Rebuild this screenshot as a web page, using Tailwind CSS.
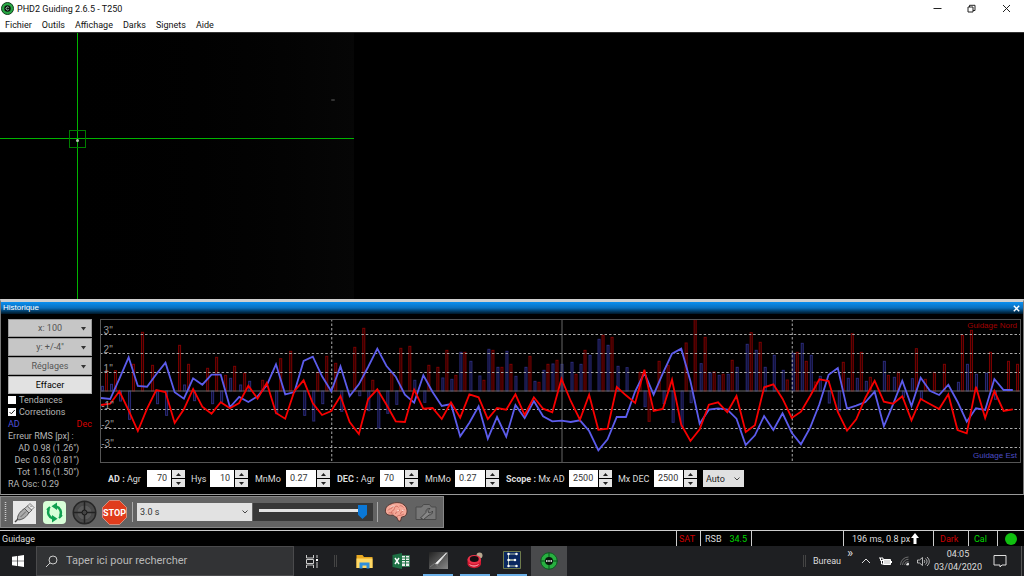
<!DOCTYPE html>
<html lang="fr">
<head>
<meta charset="utf-8">
<title>PHD2 Guiding 2.6.5 - T250</title>
<script src="https://cdn.jsdelivr.net/npm/@tailwindcss/browser@4"></script>
</head>
<body class="flex min-h-screen flex-col overflow-x-hidden bg-black font-[Roboto,'Noto_Sans',sans-serif] text-[9px] leading-3 text-white">

<header class="bg-white text-[#111]">
  <div class="flex h-[17px] items-center">
    <svg class="ml-px size-[13px]" viewBox="0 0 26 26"><circle cx="13" cy="13" r="12" fill="#27a844" stroke="#123c1c" stroke-width="2"/><circle cx="13" cy="13" r="6.500" fill="#0b130d"/><path d="M15.500 11a3 3 0 1 0 0 4" fill="none" stroke="#cfe" stroke-width="1.500"/></svg>
    <h1 class="ml-[3px] font-normal whitespace-nowrap">PHD2 Guiding 2.6.5 - T250</h1>
    <div class="ml-auto flex items-center">
      <button aria-label="Réduire" class="flex w-[34px] justify-center"><svg class="size-[9px]" viewBox="0 0 9 9"><path d="M.5 4.500h8" stroke="#222"/></svg></button>
      <button aria-label="Restaurer" class="flex w-[34px] justify-center"><svg class="size-[9px]" viewBox="0 0 9 9" fill="none" stroke="#222"><path d="M1 3h5v5H1zM2.500 3V1.300H8V6.500H6"/></svg></button>
      <button aria-label="Fermer" class="flex w-[36px] justify-center"><svg class="size-[9px]" viewBox="0 0 9 9"><path d="M1 1l7 7M8 1L1 8" stroke="#222"/></svg></button>
    </div>
  </div>
  <nav class="flex h-[15px] items-center gap-[10px] pl-[5px] whitespace-nowrap">
    <button>Fichier</button><button>Outils</button><button>Affichage</button><button>Darks</button><button>Signets</button><button>Aide</button>
  </nav>
</header>

<main class="relative min-h-[266px] flex-1 overflow-hidden border-t border-[#333] bg-black" aria-label="Image de guidage">
  <div class="absolute top-0 left-0 h-full w-[354px] bg-gradient-to-r from-black to-[#060606]"></div>
  <div class="absolute top-[66px] left-[331px] h-[2px] w-[4px] rounded-full bg-[#333]"></div>
  <div class="absolute top-[105px] left-0 h-px w-[354px] bg-[#00b400]"></div>
  <div class="absolute top-0 left-[77px] h-full w-px bg-[#00b400]"></div>
  <div class="absolute top-[97px] left-[69px] h-[18px] w-[17px] border border-[#007c00]"></div>
  <div class="absolute top-[106px] left-[76px] size-[3px] rounded-full bg-[#b0c8b0]"></div>
</main>

<section class="border-x border-t-[3px] border-b border-x-[#777] border-t-[#cfcfcf] border-b-[#999] bg-black" aria-label="Historique">
  <div class="flex h-3 items-center justify-between bg-gradient-to-b from-[#0a8ff0] via-[#0a6fbd] to-[#001626] pr-[3px] pl-[2px] font-['Liberation_Sans',Arial,sans-serif] text-[8px]">
    <h2>Historique</h2>
    <button aria-label="Fermer l'historique"><svg class="size-[7px]" viewBox="0 0 7 7"><path d="M.8.8l5.400 5.400M6.200.8L.8 6.200" stroke="#fff" stroke-width="1.400"/></svg></button>
  </div>
  <div class="flex gap-2 pt-[5px] pr-[2px] pl-[7px]">
    <div class="w-[84px] shrink-0 text-[#b4b4b4]">
      <div class="flex flex-col gap-px">
        <button class="relative h-[18px] border border-[#999] bg-[#c6c6c6] text-[#555]">x: 100<svg class="absolute top-[7px] right-1 h-1 w-[7px]" viewBox="0 0 7 4"><path d="M1 0h5L3.500 3.500z" fill="#333"/></svg></button>
        <button class="relative h-[18px] border border-[#999] bg-[#c6c6c6] text-[#555]">y: +/-4''<svg class="absolute top-[7px] right-1 h-1 w-[7px]" viewBox="0 0 7 4"><path d="M1 0h5L3.500 3.500z" fill="#333"/></svg></button>
        <button class="relative h-[18px] border border-[#999] bg-[#c6c6c6] text-[#555]">Réglages<svg class="absolute top-[7px] right-1 h-1 w-[7px]" viewBox="0 0 7 4"><path d="M1 0h5L3.500 3.500z" fill="#333"/></svg></button>
        <button class="h-[18px] border border-[#aaa] bg-[#e2e2e2] text-black">Effacer</button>
      </div>
      <label class="flex h-3 items-center gap-[3px]"><input type="checkbox" class="size-2 appearance-none bg-white">Tendances</label>
      <label class="flex h-3 items-center gap-[3px]"><span class="relative flex size-2"><input type="checkbox" checked class="size-2 appearance-none bg-white"><svg class="pointer-events-none absolute inset-0 size-2" viewBox="0 0 8 8"><path d="M1.500 4l1.800 1.800L6.800 2" fill="none" stroke="#222"/></svg></span>Corrections</label>
      <div class="flex justify-between"><span class="text-[#5050d8]">AD</span><span class="text-[#d80000]">Dec</span></div>
      <p>Erreur RMS [px] :</p>
      <dl class="grid grid-cols-[22px_1fr] gap-x-[3px]">
        <dt class="text-right">AD</dt><dd>0.98 (1.26'')</dd>
        <dt class="text-right">Dec</dt><dd>0.63 (0.81'')</dd>
        <dt class="text-right">Tot</dt><dd>1.16 (1.50'')</dd>
      </dl>
      <p>RA Osc: 0.29</p>
    </div>
    <div class="min-w-0 flex-1">
      <div class="relative h-36 overflow-hidden font-['Liberation_Sans',Arial,sans-serif] text-[10px] text-[#999]">
        <svg id="graph" class="block h-36 w-full" viewBox="0 0 920 144" preserveAspectRatio="none" fill="none">
          <g id="bars"></g>
          <path d="M0 72H920" stroke="#666"/>
          <path d="M461.500 0V144" stroke="#666"/>
          <path d="M0 15.500H920M0 34.500H920M0 53.500H920M0 90.500H920M0 109.500H920M0 128.500H920M231.500 0V144M691.500 0V144" stroke="#aaa" stroke-dasharray="2.500 2"/>
          <path id="ra" stroke="#5c5cec" stroke-width="1.800"/>
          <path id="dec" stroke="#f80000" stroke-width="1.800"/>
          <path d="M.5.5H919.500V143.500H.5z" stroke="#555"/>
        </svg>
        <div class="absolute top-[2px] left-0 w-[13px] text-right leading-[19px]">
          <p>3''</p><p>2''</p><p>1''</p>
        </div>
        <div class="absolute top-[77px] left-0 w-[14px] text-right leading-[19px]">
          <p>-1''</p><p>-2''</p><p>-3''</p>
        </div>
        <span class="absolute top-px right-1 text-[8px] text-[#a00000]">Guidage Nord</span>
        <span class="absolute right-1 bottom-px text-[8px] text-[#4c4cc4]">Guidage Est</span>
      </div>
      <form id="params" class="flex h-[31px] items-center pl-2 whitespace-nowrap text-[#ddd]">
        <label for="ra-agr" class="w-[39px]"><b>AD :</b> Agr</label>
        <span class="flex"><input id="ra-agr" value="70" class="h-[17px] w-6 bg-white pr-1 pb-px text-right text-[#333]"><span data-spin></span></span>
        <label for="ra-hys" class="ml-[6px] w-[19px]">Hys</label>
        <span class="flex"><input id="ra-hys" value="10" class="h-[17px] w-6 bg-white pr-1 pb-px text-right text-[#333]"><span data-spin></span></span>
        <label for="ra-mn" class="ml-[7px] w-[31px]">MnMo</label>
        <span class="flex"><input id="ra-mn" value="0.27" class="h-[17px] w-[30px] bg-white pb-px pl-1 text-[#333]"><span data-spin></span></span>
        <label for="dec-agr" class="ml-[7px] w-[43px]"><b>DEC :</b> Agr</label>
        <span class="flex"><input id="dec-agr" value="70" class="h-[17px] w-6 bg-white pb-px pl-1 text-[#333]"><span data-spin></span></span>
        <label for="dec-mn" class="ml-[7px] w-[30px]">MnMo</label>
        <span class="flex"><input id="dec-mn" value="0.27" class="h-[17px] w-[30px] bg-white pb-px pl-1 text-[#333]"><span data-spin></span></span>
        <label for="mx-ra" class="ml-[7px] w-[63px]"><b>Scope :</b> Mx AD</label>
        <span class="flex"><input id="mx-ra" value="2500" class="h-[17px] w-[29px] bg-white pb-px pl-1 text-[#333]"><span data-spin></span></span>
        <label for="mx-dec" class="ml-[6px] w-9">Mx DEC</label>
        <span class="flex"><input id="mx-dec" value="2500" class="h-[17px] w-[29px] bg-white pb-px pl-1 text-[#333]"><span data-spin></span></span>
        <span class="relative ml-[6px] flex"><select aria-label="Mode DEC" class="h-[17px] w-[41px] appearance-none bg-[#e0e0e0] pl-[3px] text-[#222]"><option>Auto</option></select><svg class="pointer-events-none absolute top-[7px] right-1 h-1 w-[6px]" viewBox="0 0 6 4"><path d="M.5.5L3 3 5.500.5" fill="none" stroke="#444"/></svg></span>
      </form>
    </div>
  </div>
</section>

<div class="border-b border-[#ccc] pt-px pb-[2px]" role="toolbar" aria-label="Guidage">
  <div class="flex h-8 w-[444px] items-center border border-[#888] bg-[#636363] pl-[3px]">
    <svg class="h-5 w-[3px]" viewBox="0 0 3 20"><path d="M1.500 0v20" stroke="#ccc" stroke-width="1.500" stroke-dasharray="1 1"/></svg>
    <button aria-label="Connecter" class="ml-[6px] size-[23px] bg-[#e8e8e8]">
      <svg class="size-[23px]" viewBox="0 0 46 46"><path d="M4 42l7-7" stroke="#444" stroke-width="3"/><path d="M9 36c0-8 5-15 14-21l9 8C27 32 20 37 11 38z" fill="#aaa" stroke="#444" stroke-width="1.800"/><path d="M23 15l6-5 9 8-6 6z" fill="#c8c8c8" stroke="#444" stroke-width="1.500"/><path d="M29 10l5-5 8 8-5 5z" fill="#eee" stroke="#555" stroke-width="1.500"/><path d="M15 32l11-11M34 9l3 3" stroke="#666" stroke-width="2"/></svg>
    </button>
    <button aria-label="Boucler" class="ml-[7px] size-[23px] rounded-sm bg-[#d8ffd8]">
      <svg class="size-[23px]" viewBox="0 0 46 46" fill="none" stroke="#10a050" stroke-width="5"><path d="M20 35A13 13 0 0 1 12 16M26 11a13 13 0 0 1 8 19"/><path d="M28 3v15l-11-7.500zM18 28v15l11-7.500z" fill="#10a050" stroke="none"/><path d="M8 18l6-6M38 28l-6 6" stroke-width="4"/></svg>
    </button>
    <button aria-label="Guider" class="ml-[6px] size-[25px]">
      <svg class="size-[25px]" viewBox="0 0 50 50"><circle cx="25" cy="25" r="22.500" fill="#4a4a4a" stroke="#262626" stroke-width="3"/><circle cx="25" cy="25" r="15" fill="#5a5a5a" stroke="#484848" stroke-width="2"/><path d="M25 3v44M3 25h44" stroke="#222" stroke-width="3"/><circle cx="25" cy="25" r="5" fill="#444" stroke="#161616" stroke-width="2"/></svg>
    </button>
    <button aria-label="Stop" class="ml-[5px] size-[25px]">
      <svg class="size-[25px]" viewBox="0 0 50 50"><path d="M15 1h20l14 14v20L35 49H15L1 35V15z" fill="#e03c1c" stroke="#e8a090" stroke-width="1.500"/><text x="25" y="32" text-anchor="middle" font-family="Roboto" font-weight="bold" font-size="18" fill="#fff">STOP</text></svg>
    </button>
    <div class="ml-[5px] h-5 w-px bg-[#aaa]"></div>
    <span class="relative ml-1 flex"><select aria-label="Durée d'exposition" class="h-[18px] w-[115px] appearance-none bg-[#e2e2e2] pl-[3px] text-[#333]"><option>3.0 s</option></select><svg class="pointer-events-none absolute top-[7px] right-1 h-1 w-[6px]" viewBox="0 0 6 4"><path d="M.5.5L3 3 5.500.5" fill="none" stroke="#444"/></svg></span>
    <div class="ml-px flex h-[18px] w-[120px] items-center bg-[#383838] px-[6px]">
      <input type="range" aria-label="Gamma" min="0" max="100" value="100" class="mb-[3px] h-[14px] w-full appearance-none bg-transparent [&::-webkit-slider-runnable-track]:h-[3px] [&::-webkit-slider-runnable-track]:bg-linear-[to_right,#e4e4e4_100px,transparent_100px] [&::-webkit-slider-thumb]:mt-[-4px] [&::-webkit-slider-thumb]:h-[14px] [&::-webkit-slider-thumb]:w-[9px] [&::-webkit-slider-thumb]:appearance-none [&::-webkit-slider-thumb]:bg-[#0a78d7] [&::-webkit-slider-thumb]:[clip-path:polygon(0_0,100%_0,100%_70%,50%_100%,0_70%)]">
    </div>
    <div class="ml-1 h-5 w-px bg-[#aaa]"></div>
    <button aria-label="Configuration avancée" class="ml-[6px] h-5 w-6">
      <svg class="h-5 w-6" viewBox="0 0 48 40"><path d="M3 19C2 11 8 6 14 4c8-4 20-4 26 2 6 4 7 12 5 18-2 5-6 5-10 6l-2 8h-4l-4-8c-4 0-5-4-8-4C11 27 4 26 3 19z" fill="#f4a898" stroke="#40211c" stroke-width="1.500"/><path d="M8 17c3-6 7-1 9-7M15 22c-1-6 6-4 6-9s6-6 8-2M23 24c1-7 8-3 8-9M33 24c-1-5 7-4 7-10M9 22c4-2 6 2 10 0M31 8c3-2 6 1 8 3M26 29c3-4 9-1 14-5" fill="none" stroke="#c86458" stroke-width="1.600"/><path d="M13 10c3-2 6-2 8-2M26 18l4-1M36 17l4-1" stroke="#ffe0d8" stroke-width="2"/></svg>
    </button>
    <button aria-label="Réglages caméra" class="ml-[7px] h-[18px] w-[22px]">
      <svg class="h-[18px] w-[22px]" viewBox="0 0 44 36"><path d="M2 8h11l4-5h12l4 5h9v25H2z" fill="#777" stroke="#4a4a4a" stroke-width="2"/><path d="M11 30l11-11c-1-5 3-9 8-8l-4 4 1 4 4 1 4-4c1 5-3 8-7 8L17 33z" fill="#888" stroke="#3e3e3e" stroke-width="1.800"/></svg>
    </button>
  </div>
</div>

<div class="flex h-[15px] items-center whitespace-nowrap text-[#ddd]" role="status">
  <span class="flex-1 pl-[2px]">Guidage</span>
  <span class="flex h-full w-6 items-center border-l border-[#ccc] pl-[2px] text-[#cc0000]">SAT</span>
  <span class="flex h-full w-[52px] items-center gap-2 border-x border-[#ccc] pl-1">RSB <span class="text-[#00d800]">34.5</span></span>
  <span class="w-[91px]"></span>
  <span class="flex h-full w-[90px] items-center border-l border-[#ccc] pl-2">196 ms, 0.8 px<svg class="ml-px h-[11px] w-2" viewBox="0 0 8 11"><path d="M4 0l4 5H5.500v6h-3V5H0z" fill="#fff"/></svg></span>
  <span class="flex h-full w-[35px] items-center border-l border-[#ccc] pl-[6px] text-[#cc0000]">Dark</span>
  <span class="flex h-full w-[29px] items-center border-l border-[#ccc] pl-[5px] text-[#00d800]">Cal</span>
  <span class="flex h-full w-[27px] items-center justify-center border-l border-[#ccc]"><span class="size-3 rounded-full bg-[#10c010]"></span></span>
</div>

<footer class="flex h-[30px] items-center bg-[#1e1f22] whitespace-nowrap">
  <button aria-label="Démarrer" class="flex h-full w-9 items-center justify-center"><svg class="size-3" viewBox="0 0 24 24" fill="#fff"><path d="M0 3.500l10-1.400V11.300H0zM11.500 2L24 0v11.300H11.500zM0 12.700h10v9.200L0 20.500zM11.500 12.700H24V24l-12.500-2z"/></svg></button>
  <div class="flex h-full w-[258px] items-center border border-[#4a4a4c] bg-[#323335] pl-2">
    <svg class="size-[13px] shrink-0" viewBox="0 0 13 13" fill="none" stroke="#ccc"><circle cx="8" cy="5" r="4"/><path d="M5 8L1 12"/></svg>
    <input aria-label="Rechercher" placeholder="Taper ici pour rechercher" class="ml-2 w-full bg-transparent text-[11px] placeholder:text-[#b8b8b8] placeholder:opacity-100">
  </div>
  <button aria-label="Vue des tâches" class="ml-[11px]"><svg class="h-[13px] w-[14px]" viewBox="0 0 14 13" fill="none" stroke="#ccc"><path d="M1.500 0v3h7V0M1.500 13v-3h7v3M1.500 4.500h7v4h-7zM12 0v3M12 7v6"/><path d="M11 5h2" stroke="#fff" stroke-width="2"/></svg></button>
  <div class="ml-[15px] h-3 w-[3px] border-x border-[#444]"></div>
  <div class="ml-[9px] flex h-full gap-px">
    <button aria-label="Explorateur" class="flex w-9 items-center justify-center"><svg class="h-[15px] w-[17px]" viewBox="0 0 34 30"><path d="M1 2h12l3 4h17v22H1z" fill="#e8a820"/><path d="M1 9h32v19H1z" fill="#ffd865"/><path d="M7 29V17h20v12h-6v-6h-8v6z" fill="#2f8fdc"/></svg></button>
    <button aria-label="Excel" class="flex w-9 items-center justify-center"><svg class="h-4 w-[18px]" viewBox="0 0 36 32"><path d="M18 5h17v22H18z" fill="#eee" stroke="#1f7244" stroke-width="1.500"/><path d="M20 10h14M20 15h14M20 20h14M27 6v20" stroke="#1f7244" stroke-width="2"/><path d="M1 4l19-4v32L1 28z" fill="#1d7044"/><path d="M6 10l8 12M14 10L6 22" stroke="#fff" stroke-width="2.800"/></svg></button>
    <button aria-label="Imagerie" class="flex w-9 items-center justify-center px-[3px]"><span class="flex h-full w-[30px] items-center justify-center border-b-2 border-[#6bb0e8]"><svg class="h-[17px] w-[19px]" viewBox="0 0 38 34"><defs><linearGradient id="sky" x1="0" y1="0" x2="1" y2="1"><stop stop-color="#222"/><stop offset="1" stop-color="#888"/></linearGradient></defs><path d="M0 0h38v34H0z" fill="url(#sky)"/><path d="M13 23L35 2l-18 22z" fill="#fff" stroke="#ddd" stroke-width="2"/><path d="M2 30l9-7 8 6" fill="none" stroke="#777" stroke-width="2"/></svg></span></button>
    <button aria-label="Caméra" class="flex w-9 items-center justify-center px-[3px]"><span class="flex h-full w-[30px] items-center justify-center border-b-2 border-[#6bb0e8]"><svg class="h-[17px] w-4" viewBox="0 0 32 34"><circle cx="25" cy="7" r="6" fill="#b8a890"/><path d="M1 15v9c2 11 25 11 27 0v-9z" fill="#d01830"/><ellipse cx="14.500" cy="15" rx="13.500" ry="9" fill="#ec3048"/><ellipse cx="14.500" cy="14" rx="9" ry="6" fill="#160c10"/><path d="M5 25c5 4 13 4 18 0" fill="none" stroke="#ffc0c8" stroke-width="2"/></svg></span></button>
    <button aria-label="Constellation" class="flex w-9 items-center justify-center px-[3px]"><span class="flex h-full w-[30px] items-center justify-center border-b-2 border-[#6bb0e8]"><svg class="size-[18px]" viewBox="0 0 36 36"><path d="M1 1h34v34H1z" fill="#0a2860" stroke="#8c9a50" stroke-width="1.500"/><path d="M27 6H11v11l13 1-13 1v11h16" fill="none" stroke="#dfe8c0" stroke-width="1.500"/><g fill="#fff"><circle cx="27" cy="6" r="2.500"/><circle cx="11" cy="6" r="2.500"/><circle cx="11" cy="18" r="2.500"/><circle cx="24" cy="18" r="2.500"/><circle cx="11" cy="30" r="2.500"/><circle cx="27" cy="30" r="2.500"/></g></svg></span></button>
    <button aria-label="PHD2" class="flex w-9 items-center justify-center bg-[#494a4c]"><svg class="size-[18px]" viewBox="0 0 36 36"><circle cx="18" cy="18" r="16.500" fill="#28b040" stroke="#0c5c20" stroke-width="2"/><path d="M18 1v34M1 18h34" stroke="#0d4a1c" stroke-width="2"/><circle cx="18" cy="18" r="8" fill="#08180c"/><path d="M12 18h12" stroke="#fff" stroke-width="3" stroke-dasharray="3 1.500"/></svg></button>
  </div>
  <div class="ml-auto flex h-full items-center text-[#ddd]">
    <div class="h-3 w-[3px] border-x border-[#444]"></div>
    <span class="ml-[7px] w-[34px]">Bureau</span>
    <button class="text-[13px]" aria-label="Plus"><span class="block pb-4">»</span></button>
    <div class="ml-2 flex items-center gap-2">
      <svg class="h-[6px] w-[10px]" viewBox="0 0 10 6"><path d="M1 5l4-4 4 4" fill="none" stroke="#ddd"/></svg>
      <svg class="h-[9px] w-[13px]" viewBox="0 0 13 9"><path d="M4.500 2.500h7v5h-7z" fill="#ddd" stroke="#fff"/><path d="M12.500 4v2M0 1h4v2.500H1.500V1M2.500 3v4h2" fill="none" stroke="#fff"/></svg>
      <svg class="h-[10px] w-[9px]" viewBox="0 0 18 20" fill="none" stroke="#888" stroke-width="1.500"><path d="M1 18A16 16 0 0 1 17 2M5 18A12 12 0 0 1 17 6.500M9 18a8 8 0 0 1 8-7"/><path d="M13 18a4 4 0 0 1 4-4v4z" fill="#eee" stroke="#eee"/></svg>
      <svg class="h-[11px] w-[13px]" viewBox="0 0 26 22" fill="none" stroke="#ddd" stroke-width="1.600"><path d="M1 8h4l6-5v16l-6-5H1zM14 8c2 2 2 4 0 6M17 5c4 4 4 8 0 12M20 2c6 6 6 12 0 18"/></svg>
    </div>
    <div class="ml-1 w-12 text-center leading-[13px]"><p>04:05</p><p>03/04/2020</p></div>
    <button aria-label="Notifications" class="ml-[11px]"><svg class="size-[14px]" viewBox="0 0 14 14"><path d="M1 1.500h12v9.500H9L7 13v-2H1z" fill="none" stroke="#ddd"/></svg></button>
    <div class="ml-[14px] h-full w-[3px] border-l border-[#555]"></div>
  </div>
</footer>

<script>
// Graph samples, top-down at three units per pixel; ZERO is the centre line.
const ZERO = 237, STEP = 9.2;
const ra = [258,261,200,136,222,224,187,152,241,260,199,218,188,188,286,255,270,253,220,157,247,240,147,134,193,238,163,252,217,165,110,162,194,248,272,190,240,282,276,373,332,283,380,315,374,279,318,267,313,328,326,330,325,357,415,382,315,315,238,183,248,184,125,110,208,335,293,289,293,320,399,370,312,354,304,362,397,347,277,188,168,290,281,270,239,343,277,206,282,197,236,249,218,269,329,289,294,201,234,234];
const dec = [279,275,238,295,357,290,234,240,333,292,231,284,305,271,289,273,221,260,213,303,320,237,205,274,309,297,252,330,366,262,232,278,328,330,233,290,288,321,271,317,247,256,321,288,293,247,309,256,290,301,200,267,323,248,353,350,225,250,273,173,297,291,203,338,387,352,278,271,301,252,360,340,226,217,260,318,299,252,202,207,300,356,322,257,206,269,275,253,325,261,276,291,247,354,364,224,318,237,297,292];
// Correction pulses by sample index.
const raPulse = {0:223,1:217,2:267,3:322,6:275,7:310,9:219,10:266,12:275,13:270,14:199,15:219,16:208,19:305,22:310,23:327,24:275,26:298,28:251,29:296,30:348,31:304,32:277,34:205,35:271,37:198,38:202,39:121,40:148,41:192,42:112,43:166,44:118,45:193,46:166,47:208,48:175,49:156,50:157,51:151,52:157,53:130,54:82,55:100,56:163,57:167,59:284,61:275,62:331,63:345,64:272,65:155,66:183,67:190,68:187,69:166,70:97,71:115,72:166,73:130,74:175,75:124,76:94,77:130,78:193,79:273,80:297,81:199,82:199,83:208,85:148,86:196,87:256,88:200,89:260,93:211,94:157,95:187,96:184,97:262};
const decPulse = {0:175,1:176,3:157,4:61,5:160,8:100,9:157,11:169,12:136,13:190,14:163,15:184,17:205,19:140,20:118,23:181,24:133,25:154,27:106,28:49,29:205,31:181,32:109,33:103,35:160,36:166,37:115,38:190,39:121,41:205,42:115,43:166,44:157,46:133,47:211,48:157,49:145,51:187,52:115,54:70,55:76,58:181,59:328,60:148,61:160,63:93,64:21,65:76,66:180,67:187,68:145,70:62,71:91,74:204,75:121,76:148,77:210,80:151,81:65,82:121,83:196,85:190,86:181,88:110,89:202,90:181,91:157,93:70,94:55,96:121,98:148,99:157};
const toY = v => 72 + (v - ZERO) / 3;
const line = a => a.map((v, i) => (i ? 'L' : 'M') + (1 + i * STEP).toFixed(1) + ' ' + toY(v).toFixed(1)).join('');
document.getElementById('ra').setAttribute('d', line(ra));
document.getElementById('dec').setAttribute('d', line(dec));
const bars = (data, dx, stroke, fill) => Object.entries(data).map(([i, v]) => {
  const y = toY(v), x = Math.floor(1 + i * STEP + dx) + 0.5;
  return `<rect x="${x}" y="${Math.min(y, 72)}" width="2" height="${Math.abs(y - 72)}" stroke="${stroke}" fill="${fill}"/>`;
}).join('');
document.getElementById('bars').innerHTML = bars(raPulse, 0, '#2a2a78', '#0c0c28') + bars(decPulse, 4, '#7c0000', '#200000');
document.querySelectorAll('[data-spin]').forEach(s => {
  s.className = 'ml-px flex h-[17px] w-[13px] flex-col gap-px';
  s.innerHTML = ['Augmenter', 'Diminuer'].map((n, k) =>
    `<button type="button" aria-label="${n}" class="flex h-2 items-center justify-center bg-[#e4e4e4]"><svg class="h-[3px] w-[5px]" viewBox="0 0 5 3"><path d="${k ? 'M0 0h5L2.500 3z' : 'M0 3h5L2.500 0z'}" fill="#222"/></svg></button>`).join('');
});
</script>
</body>
</html>
